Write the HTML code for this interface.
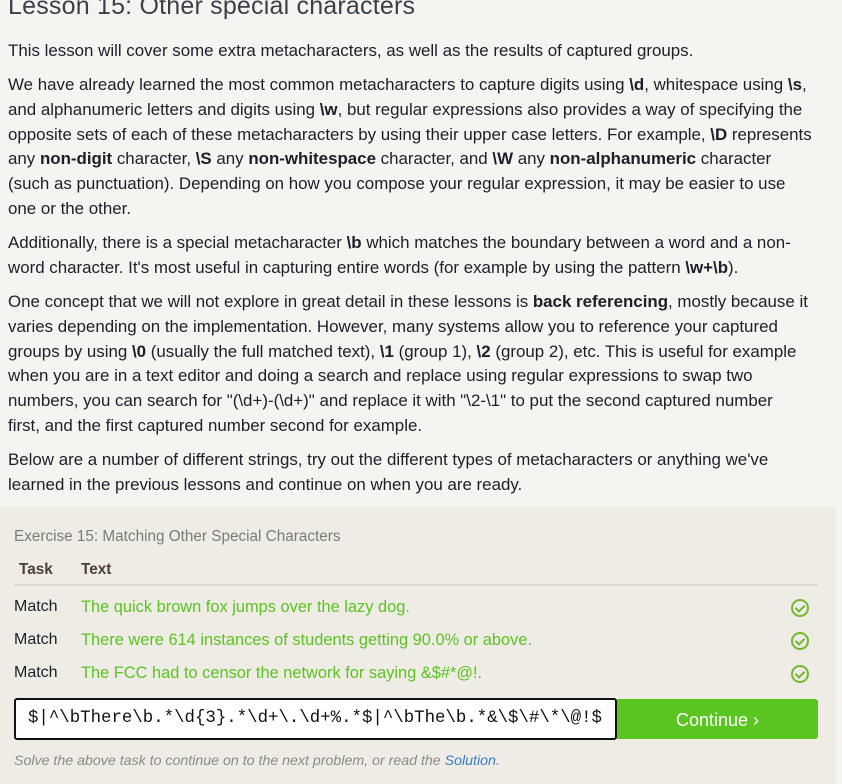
<!DOCTYPE html>
<html><head><meta charset="utf-8"><style>
html,body{margin:0;padding:0;background:#f5f4f1;width:842px;height:784px;overflow:hidden;font-family:"Liberation Sans",sans-serif;color:#1e1e2a}
h1{position:absolute;left:8px;top:-8px;margin:0;font-size:25px;font-weight:normal;color:#3a3f4a;letter-spacing:0.2px}
.p{position:absolute;left:8px;font-size:16.9px;line-height:24.8px;white-space:nowrap}
b{font-weight:bold}
.ex{position:absolute;left:0;top:507px;width:836px;height:277px;background:#efece5}
.t{position:absolute;font-size:15.3px;white-space:nowrap}
.g{color:#5ac421;font-size:16.4px}
.chk{position:absolute;left:791px;width:18px;height:18px;border:2.5px solid #74b82e;border-radius:50%;box-sizing:border-box}
.chk:after{content:"";position:absolute;left:4px;top:1.5px;width:4px;height:7px;border:solid #74b82e;border-width:0 2.5px 2.5px 0;transform:rotate(45deg)}
</style></head><body>
<h1>Lesson 15: Other special characters</h1>
<div class="p" style="top:39px">This lesson will cover some extra metacharacters, as well as the results of captured groups.</div>
<div class="p" style="top:73px">We have already learned the most common metacharacters to capture digits using <b>\d</b>, whitespace using <b>\s</b>,<br>and alphanumeric letters and digits using <b>\w</b>, but regular expressions also provides a way of specifying the<br>opposite sets of each of these metacharacters by using their upper case letters. For example, <b>\D</b> represents<br>any <b>non-digit</b> character, <b>\S</b> any <b>non-whitespace</b> character, and <b>\W</b> any <b>non-alphanumeric</b> character<br>(such as punctuation). Depending on how you compose your regular expression, it may be easier to use<br>one or the other.</div>
<div class="p" style="top:231px">Additionally, there is a special metacharacter <b>\b</b> which matches the boundary between a word and a non-<br>word character. It's most useful in capturing entire words (for example by using the pattern <b>\w+\b</b>).</div>
<div class="p" style="top:290px">One concept that we will not explore in great detail in these lessons is <b>back referencing</b>, mostly because it<br>varies depending on the implementation. However, many systems allow you to reference your captured<br>groups by using <b>\0</b> (usually the full matched text), <b>\1</b> (group 1), <b>\2</b> (group 2), etc. This is useful for example<br>when you are in a text editor and doing a search and replace using regular expressions to swap two<br>numbers, you can search for "(\d+)-(\d+)" and replace it with "\2-\1" to put the second captured number<br>first, and the first captured number second for example.</div>
<div class="p" style="top:448px">Below are a number of different strings, try out the different types of metacharacters or anything we've<br>learned in the previous lessons and continue on when you are ready.</div>
<div class="ex"></div>
<div class="t" style="left:14px;top:528px;color:#7a7a7a">Exercise 15: Matching Other Special Characters</div>
<div class="t" style="left:19px;top:561px;font-weight:bold;color:#4a4038">Task</div>
<div class="t" style="left:81px;top:561px;font-weight:bold;color:#4a4038">Text</div>
<div style="position:absolute;left:14px;top:584px;width:804px;height:2px;background:#dddad4"></div>
<div class="t" style="left:14px;top:598px;font-size:16px">Match</div><div class="t g" style="left:81px;top:598px">The quick brown fox jumps over the lazy dog.</div><div class="chk" style="top:599px"></div>
<div class="t" style="left:14px;top:631px;font-size:16px">Match</div><div class="t g" style="left:81px;top:631px">There were 614 instances of students getting 90.0% or above.</div><div class="chk" style="top:632px"></div>
<div class="t" style="left:14px;top:664px;font-size:16px">Match</div><div class="t g" style="left:81px;top:664px">The FCC had to censor the network for saying &amp;$#*@!.</div><div class="chk" style="top:665px"></div>
<div style="position:absolute;left:14px;top:698px;width:603px;height:42px;box-sizing:border-box;border:2px solid #111;border-radius:3px;background:#fff;overflow:hidden"><div style="position:absolute;left:12px;top:9px;font-family:'Liberation Mono',monospace;font-size:17.4px;white-space:nowrap;color:#111">$|^\bThere\b.*\d{3}.*\d+\.\d+%.*$|^\bThe\b.*&amp;\$\#\*\@!$</div></div>
<div style="position:absolute;left:617px;top:699px;width:201px;height:40px;background:#5ac421;border-radius:0 3px 3px 0;color:#fff;font-size:18px;text-align:center;line-height:42px">Continue ›</div>
<div class="t" style="left:14px;top:753px;font-style:italic;color:#8a8a8a;font-size:14.2px">Solve the above task to continue on to the next problem, or read the <span style="color:#3a7cc9">Solution</span>.</div>
</body></html>
